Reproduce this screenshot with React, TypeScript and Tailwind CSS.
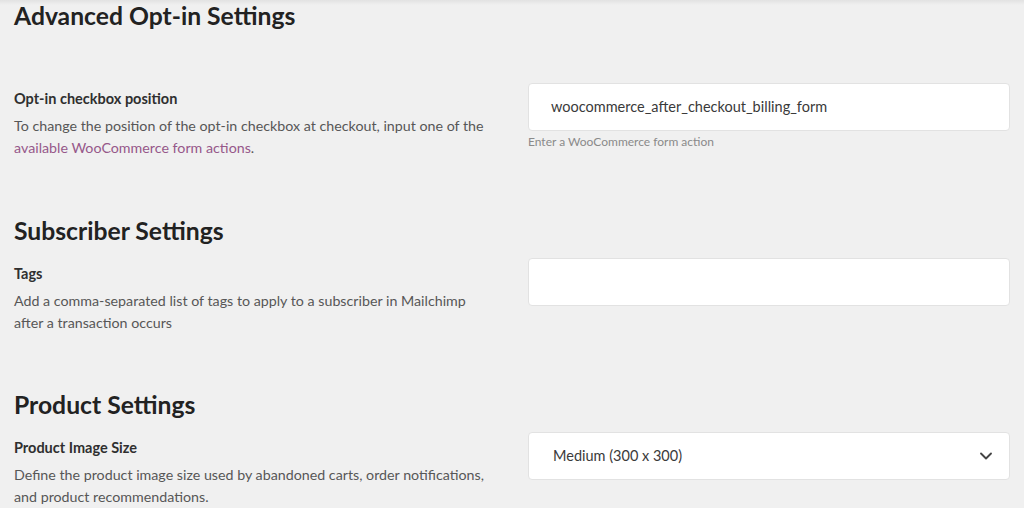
import { ChevronDown } from "lucide-react";

const font = { fontFamily: "Lato, 'Open Sans', sans-serif" };

function Row({
  label,
  children,
  field,
  hint,
}: {
  label: string;
  children: React.ReactNode;
  field: React.ReactNode;
  hint?: string;
}) {
  return (
    <div className="flex items-start">
      <div className="w-[514px] shrink-0 pr-[36px] pt-[6px]">
        <p className="text-[14.5px] font-bold leading-5 text-[#2f2f2f]">{label}</p>
        <p className="mt-[6px] text-[14.25px] leading-[22px] text-[#575757]">{children}</p>
      </div>
      <div className="w-[482px]">
        {field}
        {hint && <p className="mt-[3px] text-[12px] leading-4 text-[#8a8a8a]">{hint}</p>}
      </div>
    </div>
  );
}

function TextBox({ value }: { value?: string }) {
  return (
    <div className="flex h-[48px] items-center rounded border border-[#e2e2e2] bg-white px-[22px] text-[14.5px] text-[#3a3a3a]">
      {value}
    </div>
  );
}

export default function App() {
  return (
    <div style={font} className="relative h-[508px] overflow-hidden bg-[#f0f0f0] px-[14px]">
      <div className="pointer-events-none absolute inset-x-0 top-0 h-[5px] bg-gradient-to-b from-[#e2e2e2] to-transparent" />
      <h2 className="pt-[1px] text-[24.7px] font-bold leading-[30px] text-[#222]">Advanced Opt-in Settings</h2>

      <div className="mt-[52px]">
        <Row
          label="Opt-in checkbox position"
          field={<TextBox value="woocommerce_after_checkout_billing_form" />}
          hint="Enter a WooCommerce form action"
        >
          To change the position of the opt-in checkbox at checkout, input one of the{" "}
          <a className="text-[#96588a]">available WooCommerce form actions</a>.
        </Row>
      </div>

      <h2 className="mt-[57px] text-[24.7px] font-bold leading-[30px] text-[#222]">Subscriber Settings</h2>
      <div className="mt-[12px]">
        <Row label="Tags" field={<TextBox />}>
          Add a comma-separated list of tags to apply to a subscriber in Mailchimp after a transaction occurs
        </Row>
      </div>

      <h2 className="mt-[56px] text-[24.7px] font-bold leading-[30px] text-[#222]">Product Settings</h2>
      <div className="mt-[12px]">
        <Row
          label="Product Image Size"
          field={
            <div className="flex h-[48px] items-center justify-between rounded border border-[#e2e2e2] bg-white pl-[24px] pr-[13px] text-[14.5px] text-[#3a3a3a]">
              <span>Medium (300 x 300)</span>
              <ChevronDown size={20} strokeWidth={2.25} className="text-[#444]" />
            </div>
          }
        >
          Define the product image size used by abandoned carts, order notifications, and product recommendations.
        </Row>
      </div>
    </div>
  );
}
